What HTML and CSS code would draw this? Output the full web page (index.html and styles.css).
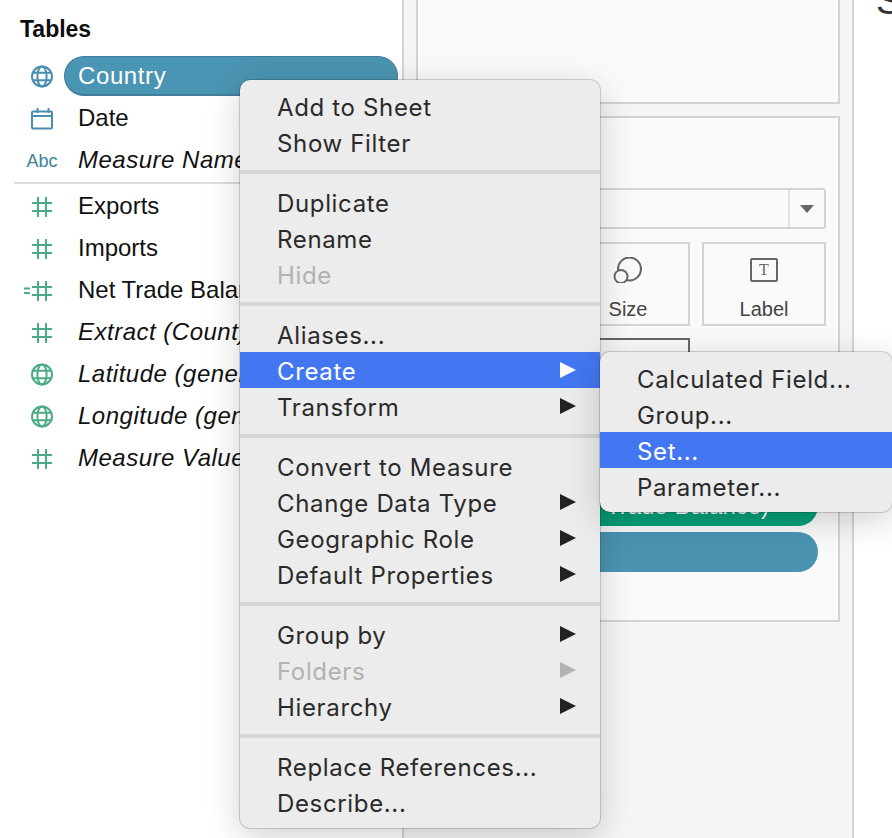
FILE: index.html
```html
<!DOCTYPE html>
<html lang="en">

<head>
    <meta charset="UTF-8">
    <title>Tables - Create menu</title>
    <meta name="viewport" content="width=device-width, initial-scale=1.0">
    <link rel="stylesheet" href="styles.css">
</head>

<body>
    <svg class="defs" width="0" height="0" aria-hidden="true">
        <symbol id="globe" viewBox="0 0 44 24">
            <circle cx="22" cy="12.5" r="10" />
            <ellipse cx="22" cy="12.5" rx="4.6" ry="10" />
            <path d="M13 8.8h18M13 16.2h18" />
        </symbol>
        <symbol id="hash" viewBox="0 0 44 24">
            <path d="M18 3v20M26 3v20M12 9h20M12 17h20" />
        </symbol>
        <symbol id="hash-calc" viewBox="0 0 44 24">
            <path d="M18 3v20M26 3v20M12 9h20M12 17h20" />
            <path d="M4 10.5h6M4 15h6" />
        </symbol>
    </svg>

    <div class="page">
        <!-- Data pane -->
        <aside class="data-pane">
            <h2 class="pane-title">Tables</h2>
            <ul class="fields">
                <li class="field dim">
                    <svg class="field-icon"><use href="#globe" /></svg>
                    <span class="field-name pill">Country</span>
                </li>
                <li class="field dim">
                    <svg class="field-icon" viewBox="0 0 44 24">
                        <rect x="12" y="5.5" width="20" height="17" rx="1" />
                        <path d="M12 10h20M17.5 2v5M28.5 2v5" />
                    </svg>
                    <span class="field-name">Date</span>
                </li>
                <li class="field dim">
                    <span class="field-abc">Abc</span>
                    <span class="field-name generated">Measure Names</span>
                </li>
                <li class="fields-divider"></li>
                <li class="field measure">
                    <svg class="field-icon"><use href="#hash" /></svg>
                    <span class="field-name">Exports</span>
                </li>
                <li class="field measure">
                    <svg class="field-icon"><use href="#hash" /></svg>
                    <span class="field-name">Imports</span>
                </li>
                <li class="field measure">
                    <svg class="field-icon"><use href="#hash-calc" /></svg>
                    <span class="field-name">Net Trade Balance</span>
                </li>
                <li class="field measure">
                    <svg class="field-icon"><use href="#hash" /></svg>
                    <span class="field-name generated">Extract (Count)</span>
                </li>
                <li class="field measure">
                    <svg class="field-icon"><use href="#globe" /></svg>
                    <span class="field-name generated">Latitude (generated)</span>
                </li>
                <li class="field measure">
                    <svg class="field-icon"><use href="#globe" /></svg>
                    <span class="field-name generated">Longitude (generated)</span>
                </li>
                <li class="field measure">
                    <svg class="field-icon"><use href="#hash" /></svg>
                    <span class="field-name generated">Measure Values</span>
                </li>
            </ul>
        </aside>

        <!-- Filters and marks -->
        <section class="shelves">
            <div class="card card-filters"></div>
            <div class="card card-marks">
                <div class="mark-select">
                    <span class="mark-select-value"></span>
                    <span class="mark-select-arrow"></span>
                </div>
                <div class="mark-buttons">
                    <div class="mark-button"></div>
                    <div class="mark-button">
                        <svg class="size-icon" width="30" height="26" viewBox="0 0 30 26">
                            <circle cx="16.5" cy="12" r="11.5" />
                            <circle cx="8" cy="19.5" r="6.5" />
                        </svg>
                        <span class="mark-label">Size</span>
                    </div>
                    <div class="mark-button">
                        <span class="label-icon">T</span>
                        <span class="mark-label">Label</span>
                    </div>
                    <div class="mark-button"></div>
                    <div class="mark-button mark-button-active"></div>
                </div>
                <div class="mark-pills">
                    <div class="mark-pill mark-pill-green">SUM(Net Trade Balance)</div>
                    <div class="mark-pill mark-pill-blue"></div>
                </div>
            </div>
        </section>

        <main class="view">
            <div class="view-title">Sheet 1</div>
        </main>
    </div>

    <!-- Context menu -->
    <div class="menu menu-main">
        <div class="menu-item">Add to Sheet</div>
        <div class="menu-item">Show Filter</div>
        <div class="menu-sep"></div>
        <div class="menu-item">Duplicate</div>
        <div class="menu-item">Rename</div>
        <div class="menu-item disabled">Hide</div>
        <div class="menu-sep"></div>
        <div class="menu-item">Aliases...</div>
        <div class="menu-item has-sub selected">Create</div>
        <div class="menu-item has-sub">Transform</div>
        <div class="menu-sep"></div>
        <div class="menu-item">Convert to Measure</div>
        <div class="menu-item has-sub">Change Data Type</div>
        <div class="menu-item has-sub">Geographic Role</div>
        <div class="menu-item has-sub">Default Properties</div>
        <div class="menu-sep"></div>
        <div class="menu-item has-sub">Group by</div>
        <div class="menu-item has-sub disabled">Folders</div>
        <div class="menu-item has-sub">Hierarchy</div>
        <div class="menu-sep"></div>
        <div class="menu-item">Replace References...</div>
        <div class="menu-item">Describe...</div>
    </div>

    <div class="menu menu-sub">
        <div class="menu-item">Calculated Field...</div>
        <div class="menu-item">Group...</div>
        <div class="menu-item selected">Set...</div>
        <div class="menu-item">Parameter...</div>
    </div>
</body>

</html>
```

FILE: styles.css
```css
/* Reset */

* {
    padding: 0;
    margin: 0;
    box-sizing: border-box;
}

html,
body {
    height: 100%;
    overflow: hidden;
}

body {
    position: relative;
    background-color: #fff;
    color: #111;
    font-family: "Liberation Sans", Arial, sans-serif;
    font-size: 24px;
}

.defs {
    position: absolute;
}

/* Page */

.page {
    display: flex;
    height: 100vh;
}

/* Data pane */

.data-pane {
    flex: 0 0 404px;
    padding-top: 14px;
    padding-left: 20px;
    background-color: #fff;
    border-right: 2px solid #d3d3d3;
}

.pane-title {
    height: 30px;
    margin-bottom: 11px;
    font-size: 23px;
    line-height: 30px;
    font-weight: bold;
    color: #0d0d0d;
}

.fields {
    list-style: none;
}

.field {
    display: flex;
    align-items: center;
    height: 42px;
}

.field-icon {
    flex: 0 0 44px;
    width: 44px;
    height: 24px;
    fill: none;
    stroke: currentColor;
    stroke-width: 2;
}

.dim .field-icon {
    color: #4a8db0;
}

.measure .field-icon {
    color: #4bab85;
}

.field-abc {
    flex: 0 0 44px;
    text-align: center;
    font-size: 18px;
    color: #41829f;
    padding-top: 2px;
}

.field-name {
    flex: 1 1 auto;
    padding-left: 14px;
    white-space: nowrap;
    overflow: hidden;
}

.generated {
    font-style: italic;
    letter-spacing: .5px;
}

.pill {
    height: 40px;
    margin-right: 4px;
    line-height: 37px;
    padding-left: 13px;
    color: #fff;
    letter-spacing: .6px;
    background-color: #4a95b3;
    border: 1px solid #417f9b;
    border-bottom-width: 2px;
    border-radius: 20px;
}

.fields-divider {
    height: 2px;
    margin: 1px 0 1px -6px;
    background-color: #dedede;
}

/* Shelves */

.shelves {
    flex: 0 0 450px;
    padding: 0 12px;
    background-color: #f5f5f5;
    border-right: 2px solid #d3d3d3;
}

.card {
    width: 424px;
    background-color: #fafafa;
    border: 2px solid #d3d3d3;
}

.card-filters {
    height: 104px;
    margin-bottom: 12px;
    border-top: 0;
}

.card-marks {
    height: 506px;
    padding: 70px 12px 0;
}

.mark-select {
    display: flex;
    height: 41px;
    background-color: #fafafa;
    border: 2px solid #d3d3d3;
    border-radius: 3px;
}

.mark-select-value {
    flex: 1 1 auto;
}

.mark-select-arrow {
    flex: 0 0 36px;
    display: flex;
    align-items: center;
    justify-content: center;
    border-left: 2px solid #e2e2e2;
}

.mark-select-arrow::before {
    content: "";
    border-left: 7px solid transparent;
    border-right: 7px solid transparent;
    border-top: 8px solid #666;
}

.mark-buttons {
    display: grid;
    grid-template-columns: repeat(3, 124px);
    grid-auto-rows: 84px;
    gap: 12px;
    margin-top: 13px;
}

.mark-button {
    display: flex;
    flex-direction: column;
    align-items: center;
    justify-content: flex-end;
    padding-bottom: 3px;
    border: 2px solid #d3d3d3;
    font-size: 20px;
    color: #444;
}

.mark-button-active {
    border-color: #666;
}

.mark-label {
    line-height: 24px;
}

.size-icon {
    display: block;
    fill: #fafafa;
    stroke: #666;
    stroke-width: 2;
    margin-bottom: 14px;
}

.label-icon {
    display: block;
    width: 28px;
    height: 24px;
    margin-bottom: 15px;
    border: 2px solid #666;
    border-radius: 2px;
    font-family: "Liberation Serif", serif;
    font-size: 16px;
    line-height: 20px;
    text-align: center;
    color: #666;
}

.mark-pills {
    margin: 64px 8px 0 32px;
}

.mark-pill {
    height: 40px;
    margin-bottom: 6px;
    padding-left: 39px;
    border-radius: 20px;
    color: #fff;
    line-height: 40px;
    white-space: nowrap;
}

.mark-pill-green {
    background-color: #05a078;
}

.mark-pill-blue {
    background-color: #4a94b2;
}

/* View */

.view {
    flex: 1 1 auto;
    padding-left: 22px;
    overflow: hidden;
}

.view-title {
    margin-top: -19px;
    font-size: 38px;
    line-height: 40px;
    white-space: nowrap;
    color: #333;
}

/* Context menus */

.menu {
    position: absolute;
    padding: 8px 0;
    background-color: #ececec;
    border-radius: 10px;
    box-shadow: 0 0 0 1px rgba(0, 0, 0, .16), 0 8px 34px rgba(0, 0, 0, .19);
    color: #2a2a2a;
    font-family: Inter, "Liberation Sans", sans-serif;
    font-size: 24px;
    letter-spacing: .65px;
}

.menu-main {
    left: 240px;
    top: 80px;
    width: 360px;
}

.menu-sub {
    left: 600px;
    top: 352px;
    width: 292px;
}

.menu-item {
    position: relative;
    height: 36px;
    padding-top: 2px;
    padding-left: 37px;
    line-height: 36px;
    white-space: nowrap;
}

.menu-item.selected {
    background-color: #4377f1;
    color: #fff;
}

.menu-item.disabled {
    color: #b2b2b2;
}

/* Triangle of the submenu items */
.has-sub::after {
    content: "";
    position: absolute;
    left: 320px;
    top: 10px;
    border-left: 16px solid #222;
    border-top: 8.5px solid transparent;
    border-bottom: 8.5px solid transparent;
}

.has-sub.selected::after {
    border-left-color: #fff;
}

.has-sub.disabled::after {
    border-left-color: #b2b2b2;
}

.menu-sep {
    height: 4px;
    margin: 10px 0;
    background-color: #d6d6d6;
}
```
